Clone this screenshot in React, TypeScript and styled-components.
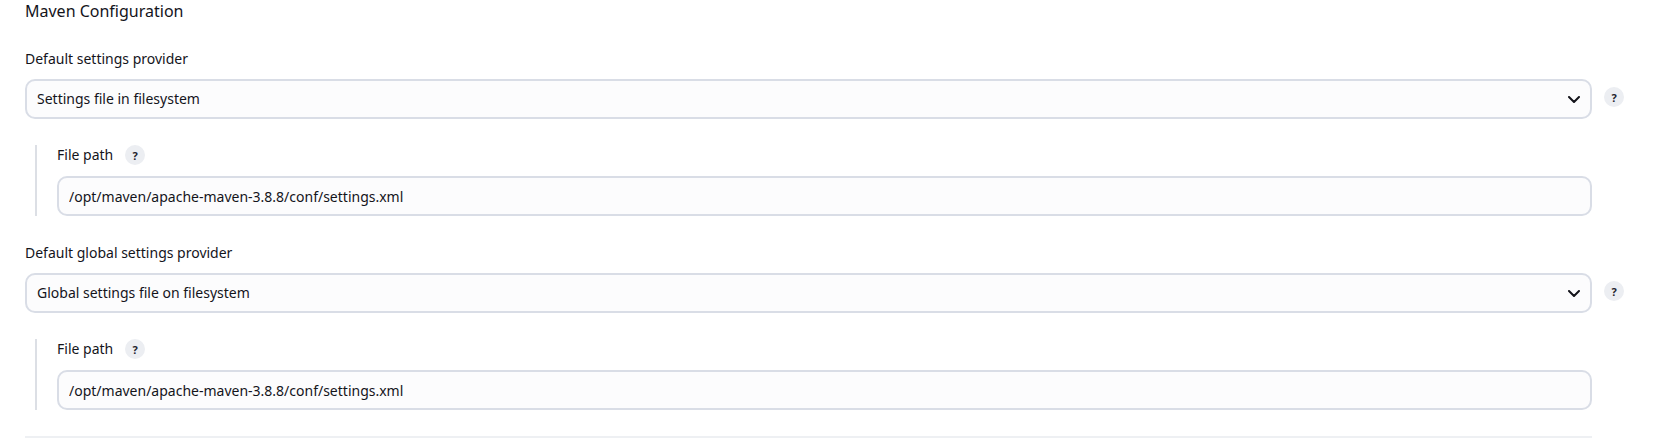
import styled, { createGlobalStyle } from "styled-components";

const GlobalStyle = createGlobalStyle`
  html, body {
    margin: 0;
    padding: 0;
    background: #ffffff;
  }
  body {
    font-family: "Noto Sans", "Open Sans", sans-serif;
    color: #14141b;
  }
`;

const providers = [
  {
    label: "Default settings provider",
    value: "Settings file in filesystem",
    path: "/opt/maven/apache-maven-3.8.8/conf/settings.xml",
  },
  {
    label: "Default global settings provider",
    value: "Global settings file on filesystem",
    path: "/opt/maven/apache-maven-3.8.8/conf/settings.xml",
  },
];

const Page = styled.div`
  display: flex;
  flex-direction: column;
  padding: 0 36px 0 25px;
`;

const Title = styled.h2`
  margin: 0;
  font-size: 16px;
  font-weight: 400;
  line-height: 22px;
`;

const Section = styled.div`
  display: grid;
  grid-template-columns: minmax(0, 1fr) 20px;
  column-gap: 12px;
  margin-top: 27px;
`;

const Label = styled.div`
  grid-column: 1;
  display: flex;
  align-items: center;
  gap: 12px;
  font-size: 14px;
  line-height: 20px;
  margin-bottom: 10px;
`;

const SelectBox = styled.div`
  grid-column: 1;
  box-sizing: border-box;
  height: 40px;
  display: flex;
  align-items: center;
  justify-content: space-between;
  padding: 0 10px;
  border: 2px solid #d9dde6;
  border-radius: 10px;
  background: #fcfcfd;
  font-size: 14px;
  line-height: 20px;
`;

const HelpButton = styled.span`
  display: inline-flex;
  align-items: center;
  justify-content: center;
  flex-shrink: 0;
  width: 20px;
  height: 20px;
  border-radius: 50%;
  background: #eceef2;
  color: #24242c;
  font-family: "Noto Sans", sans-serif;
  font-size: 11px;
  font-weight: 700;
  line-height: 1;
`;

const RowHelp = styled(HelpButton)`
  grid-column: 2;
  align-self: start;
  margin-top: 8px;
`;

const Nested = styled.div`
  grid-column: 1;
  margin: 26px 0 0 10px;
  padding-left: 20px;
  border-left: 2px solid #dcdfe5;
`;

const NestedLabel = styled(Label)`
  margin-bottom: 11px;
`;

const PathInput = styled.input`
  display: block;
  box-sizing: border-box;
  width: 100%;
  height: 40px;
  margin: 0;
  padding: 0 10px;
  border: 2px solid #d9dde6;
  border-radius: 10px;
  background: #fcfcfd;
  color: #14141b;
  font-family: "Noto Sans", "Open Sans", sans-serif;
  font-size: 14px;
  line-height: 20px;
  outline: none;
`;

const Separator = styled.hr`
  margin: 26px 32px 0 0;
  height: 2px;
  border: 0;
  background: #eef0f3;
`;

const Chevron = () => (
  <svg width="12" height="7" viewBox="0 0 12 7" fill="none">
    <path
      d="M1 1L6 6L11 1"
      stroke="#14141b"
      strokeWidth="2"
      strokeLinecap="round"
      strokeLinejoin="round"
    />
  </svg>
);

export default function App() {
  return (
    <>
      <GlobalStyle />
      <Page>
        <Title>Maven Configuration</Title>
        {providers.map((p) => (
          <Section key={p.label}>
            <Label>{p.label}</Label>
            <SelectBox>
              <span>{p.value}</span>
              <Chevron />
            </SelectBox>
            <RowHelp>?</RowHelp>
            <Nested>
              <NestedLabel>
                File path
                <HelpButton>?</HelpButton>
              </NestedLabel>
              <PathInput readOnly value={p.path} />
            </Nested>
          </Section>
        ))}
        <Separator />
      </Page>
    </>
  );
}
